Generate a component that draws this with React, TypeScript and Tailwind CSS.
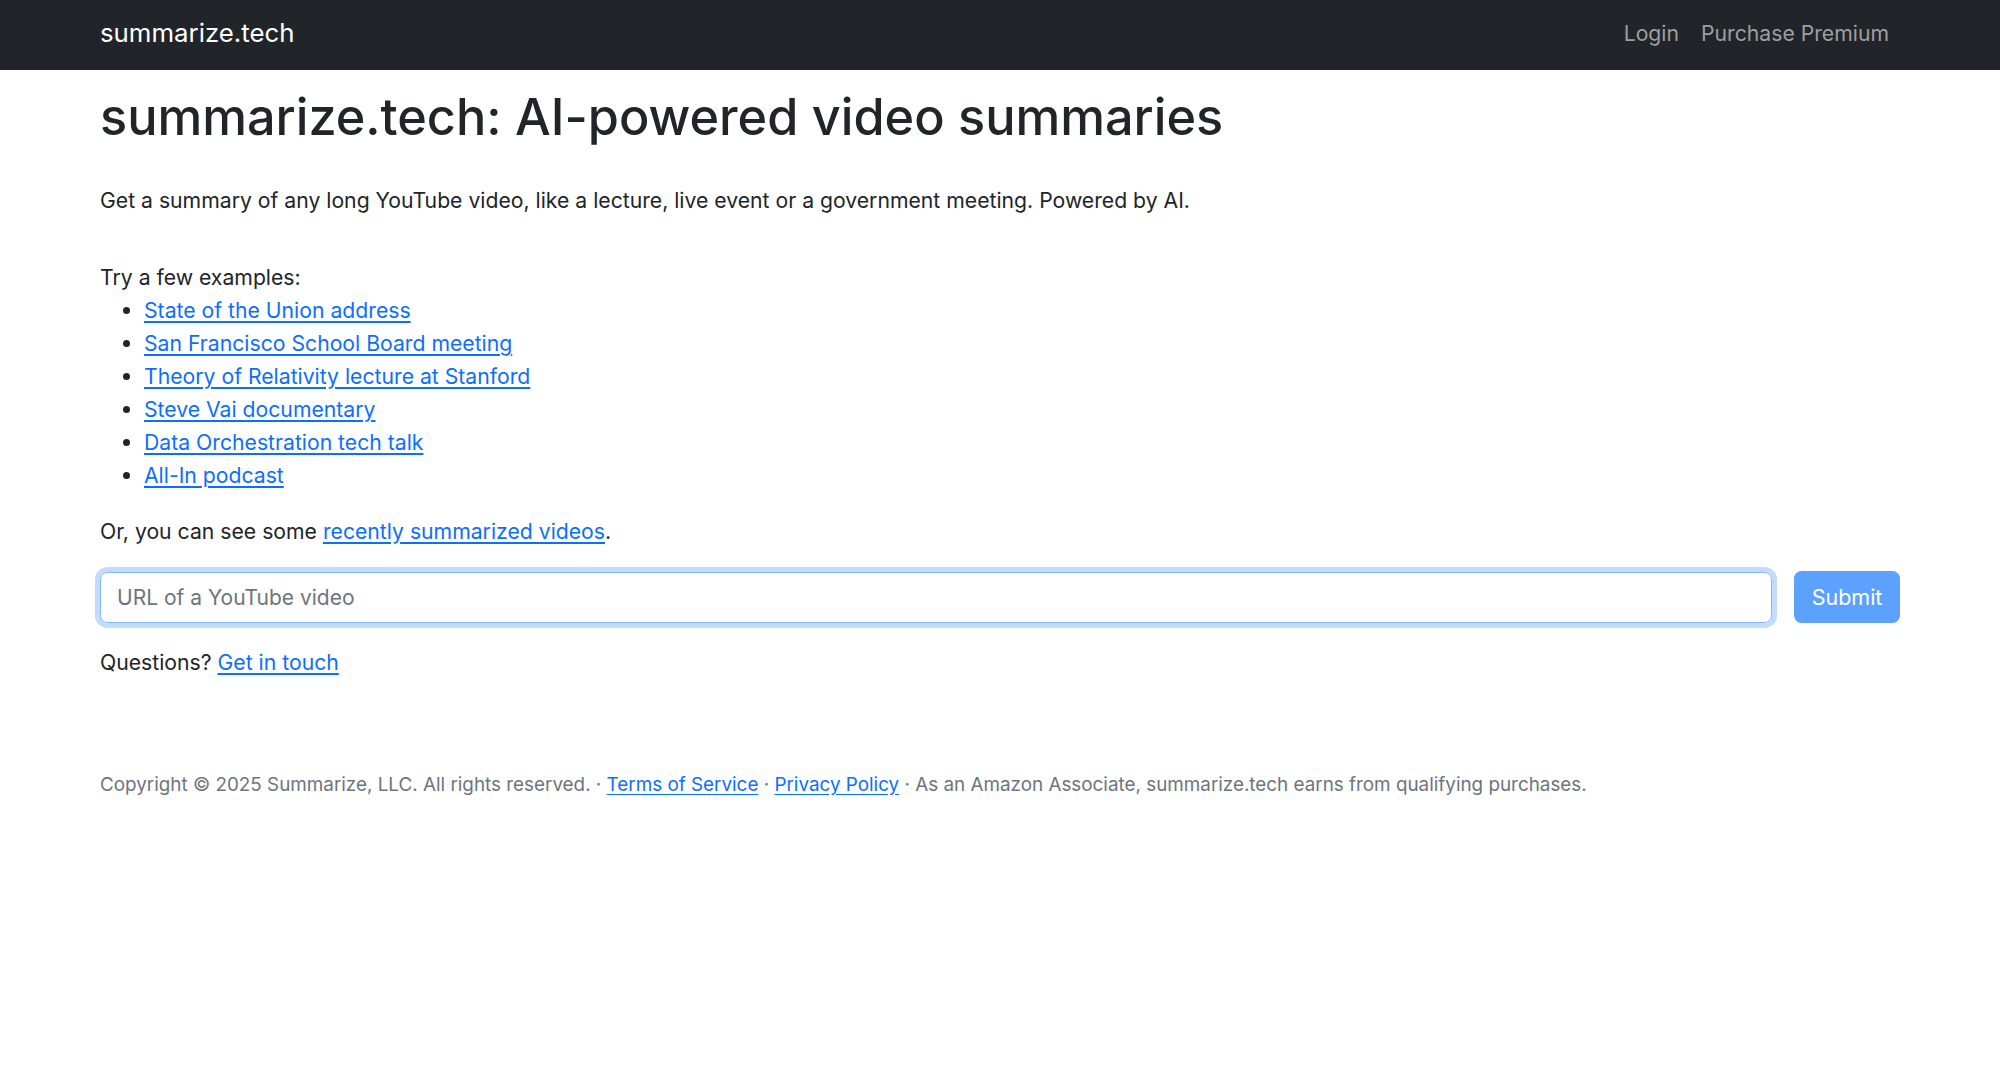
const examples = [
  "State of the Union address",
  "San Francisco School Board meeting",
  "Theory of Relativity lecture at Stanford",
  "Steve Vai documentary",
  "Data Orchestration tech talk",
  "All-In podcast",
];

const linkClass = "text-[#0d6efd] underline underline-offset-[3px]";

const App = () => {
  return (
    <div className="min-h-screen bg-white text-[#212529] font-['Inter','Liberation_Sans',sans-serif] text-[21.2px] leading-[30px]">
      {/* Navbar */}
      <nav className="h-[70px] bg-[#212529]">
        <div className="h-full px-[100px] pb-[4px] flex items-center justify-between">
          <a href="#" className="text-white text-[25.8px] leading-[36px]">
            summarize.tech
          </a>
          <div className="flex items-center gap-[2px] mr-[11px]">
            <a href="#" className="px-[10px] text-[#9d9fa1]">
              Login
            </a>
            <a href="#" className="pl-[10px] text-[#9d9fa1]">
              Purchase Premium
            </a>
          </div>
        </div>
      </nav>

      <main className="px-[100px] pt-[17px]">
        <h1 className="text-[50.4px] leading-[60px] font-medium">
          summarize.tech: AI-powered video summaries
        </h1>

        <p className="mt-[38px]">
          Get a summary of any long YouTube video, like a lecture, live event or a government
          meeting. Powered by AI.
        </p>

        <p className="mt-[47px]">Try a few examples:</p>
        <ul className="list-disc pl-[44px] mt-[2px] marker:text-[#212529]">
          {examples.map((e) => (
            <li key={e} className="leading-[33px]">
              <a href="#" className={linkClass}>
                {e}
              </a>
            </li>
          ))}
        </ul>

        <p className="mt-[24px]">
          Or, you can see some{" "}
          <a href="#" className={linkClass}>
            recently summarized videos
          </a>
          .
        </p>

        <form className="mt-[25px] flex items-center gap-[22px]" onSubmit={(e) => e.preventDefault()}>
          <input
            type="text"
            placeholder="URL of a YouTube video"
            className="flex-1 h-[51px] px-[16px] rounded-[7.5px] border border-[#86b7fe] shadow-[0_0_0_5px_rgba(13,110,253,0.25)] outline-none text-[21px] text-[#212529] placeholder:text-[#6c757d] caret-[#212529]"
          />
          <button
            type="submit"
            disabled
            className="h-[52px] w-[106px] rounded-[7.5px] bg-[#5ca1fe] text-white text-[21.5px]"
          >
            Submit
          </button>
        </form>

        <p className="mt-[24px]">
          Questions?{" "}
          <a href="#" className={linkClass}>
            Get in touch
          </a>
        </p>

        <footer className="mt-[95px] text-[18.85px] leading-[26px] text-[#6c757d]">
          Copyright © 2025 Summarize, LLC. All rights reserved. ·{" "}
          <a href="#" className={linkClass}>
            Terms of Service
          </a>{" "}
          ·{" "}
          <a href="#" className={linkClass}>
            Privacy Policy
          </a>{" "}
          · As an Amazon Associate, summarize.tech earns from qualifying purchases.
        </footer>
      </main>
    </div>
  );
};

export default App;
